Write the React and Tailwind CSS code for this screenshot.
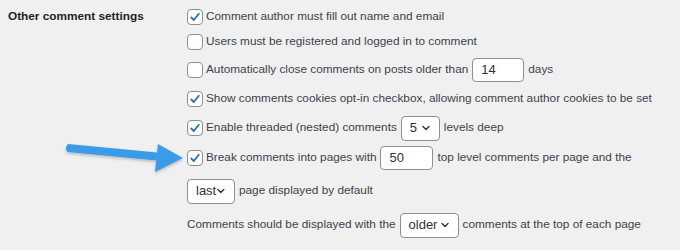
const font = { fontFamily: '"Liberation Sans", Arial, sans-serif' }

function Checkbox({ checked }) {
  return (
    <span className="w-4 h-4 mr-[3px] shrink-0 rounded-[4px] border border-[#8c8f94] bg-white flex items-center justify-center">
      {checked && (
        <svg width="12" height="12" viewBox="0 0 12 12">
          <path d="M2.2 6.4 L4.8 9 L9.8 2.8" fill="none" stroke="#2271b1" strokeWidth="1.8" strokeLinecap="round" strokeLinejoin="round" />
        </svg>
      )}
    </span>
  )
}

function NumberInput({ value, w }) {
  return (
    <span className={`mx-[4px] h-6 shrink-0 ${w} rounded-[4px] border border-[#8c8f94] bg-white px-2 flex items-center text-[13px] text-[#2c3338]`}>
      {value}
    </span>
  )
}

function Select({ value, w }) {
  return (
    <span className={`mx-[4px] h-[25px] shrink-0 ${w} rounded-[4px] border border-[#8c8f94] bg-white pl-2 pr-2 flex items-center justify-between text-[13px] text-[#2c3338]`}>
      {value}
      <svg width="10" height="10" viewBox="0 0 10 10">
        <path d="M2 3.5 L5 6.5 L8 3.5" fill="none" stroke="#2c3338" strokeWidth="1.4" strokeLinecap="round" strokeLinejoin="round" />
      </svg>
    </span>
  )
}

export default function App() {
  return (
    <div className="relative w-[680px] h-[250px] overflow-hidden bg-[#f0f0f1] text-[11.8px] text-[#3c434a] flex px-2 pt-[5px] whitespace-nowrap" style={font}>
      <div className="w-[179px] shrink-0 h-6 flex items-center font-bold text-[#1d2327]">
        Other comment settings
      </div>

      <div className="flex flex-col shrink-0">
        <div className="h-6 flex items-center">
          <Checkbox checked />
          <span>Comment author must fill out name and email</span>
        </div>
        <div className="h-[26px] flex items-center">
          <Checkbox />
          <span>Users must be registered and logged in to comment</span>
        </div>
        <div className="h-[30px] flex items-center">
          <Checkbox />
          <span>Automatically close comments on posts older than</span>
          <NumberInput value="14" w="w-[52px]" />
          <span>days</span>
        </div>
        <div className="h-7 flex items-center">
          <Checkbox checked />
          <span>Show comments cookies opt-in checkbox, allowing comment author cookies to be set</span>
        </div>
        <div className="h-[30px] flex items-center">
          <Checkbox checked />
          <span>Enable threaded (nested) comments</span>
          <Select value="5" w="w-[39px]" />
          <span>levels deep</span>
        </div>
        <div className="h-[30px] flex items-center">
          <Checkbox checked />
          <span>Break comments into pages with</span>
          <NumberInput value="50" w="w-[53px]" />
          <span>top level comments per page and the</span>
        </div>
        <div className="h-9 flex items-center">
          <span className="-ml-[4px] flex">
            <Select value="last" w="w-12" />
          </span>
          <span>page displayed by default</span>
        </div>
        <div className="h-8 flex items-center">
          <span>Comments should be displayed with the</span>
          <Select value="older" w="w-[59px]" />
          <span>comments at the top of each page</span>
        </div>
      </div>

      {/* pointer arrow */}
      <svg className="absolute left-[60px] top-[138px]" width="130" height="42" viewBox="0 0 130 42">
        <defs>
          <filter id="sh" x="-10%" y="-30%" width="120%" height="160%">
            <feDropShadow dx="0" dy="1.5" stdDeviation="1.5" floodColor="#000" floodOpacity="0.25" />
          </filter>
        </defs>
        <g filter="url(#sh)" fill="#3b9be8">
          <path d="M8 6 L97 14.5 L96.5 22.5 L7.5 14 Q4 10 8 6 Z" />
          <path d="M98 6 L123 20 L95 34 Z" />
        </g>
      </svg>
    </div>
  )
}
